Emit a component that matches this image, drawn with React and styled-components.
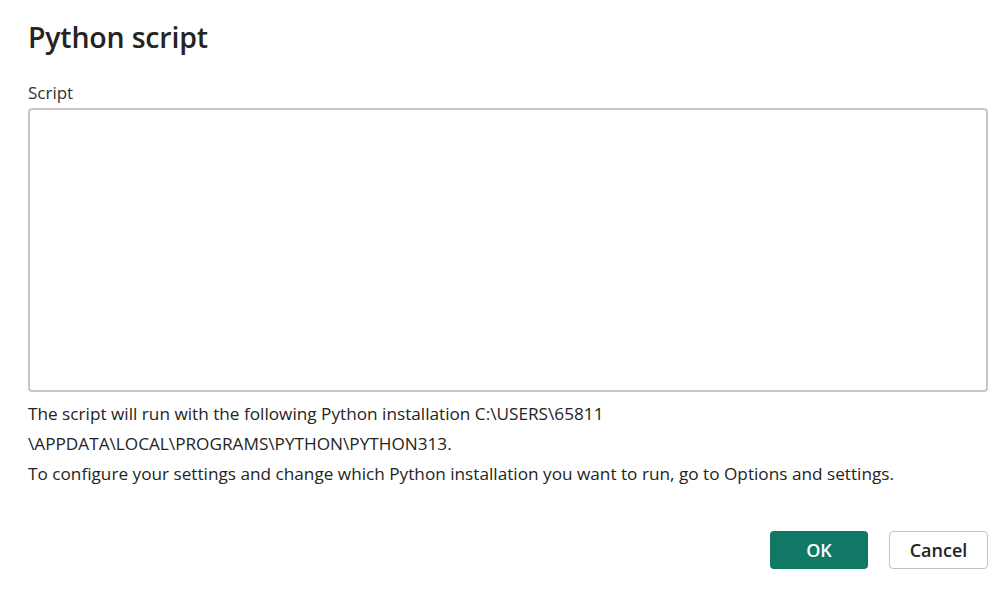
import React from "react";
import styled, { createGlobalStyle } from "styled-components";

const Global = createGlobalStyle`
  html, body { margin: 0; padding: 0; background: #ffffff; }
  body { font-family: "Open Sans", "Noto Sans", sans-serif; color: #252423; }
`;

const Dialog = styled.div`
  width: 1000px;
  height: 600px;
  box-sizing: border-box;
  padding: 17px 12px 0 28px;
  display: flex;
  flex-direction: column;
`;

const Title = styled.h1`
  margin: 0;
  font-size: 28.5px;
  font-weight: 600;
  line-height: 40px;
  color: #252423;
  letter-spacing: -0.2px;
`;

const Label = styled.label`
  margin-top: 24px;
  font-size: 17px;
  line-height: 24px;
  color: #323130;
`;

const ScriptArea = styled.textarea`
  margin-top: 3px;
  width: 960px;
  height: 284px;
  box-sizing: border-box;
  border: 2px solid #c6c6c6;
  border-radius: 4px;
  resize: none;
  outline: none;
  font-family: inherit;
`;

const Info = styled.div`
  margin-top: 7px;
  font-size: 17.2px;
  line-height: 30px;
  color: #252423;
`;

const Line = styled.div``;

const Footer = styled.div`
  margin-top: 42px;
  width: 960px;
  display: flex;
  justify-content: flex-end;
  gap: 21px;
`;

const Button = styled.button`
  width: ${(p) => (p.$primary ? "98px" : "99px")};
  height: 38px;
  box-sizing: border-box;
  border-radius: 4px;
  font-family: inherit;
  font-size: 18px;
  font-weight: 600;
  cursor: pointer;
  padding: 0;
  background: ${(p) => (p.$primary ? "#117865" : "#ffffff")};
  color: ${(p) => (p.$primary ? "#ffffff" : "#252423")};
  border: ${(p) => (p.$primary ? "none" : "1.5px solid #c2c2c2")};
`;

export default function App() {
  return (
    <>
      <Global />
      <Dialog>
        <Title>Python script</Title>
        <Label>Script</Label>
        <ScriptArea />
        <Info>
          <Line>The script will run with the following Python installation C:\USERS\65811</Line>
          <Line>\APPDATA\LOCAL\PROGRAMS\PYTHON\PYTHON313.</Line>
          <Line>
            To configure your settings and change which Python installation you want to run, go to Options and settings.
          </Line>
        </Info>
        <Footer>
          <Button $primary>OK</Button>
          <Button>Cancel</Button>
        </Footer>
      </Dialog>
    </>
  );
}
